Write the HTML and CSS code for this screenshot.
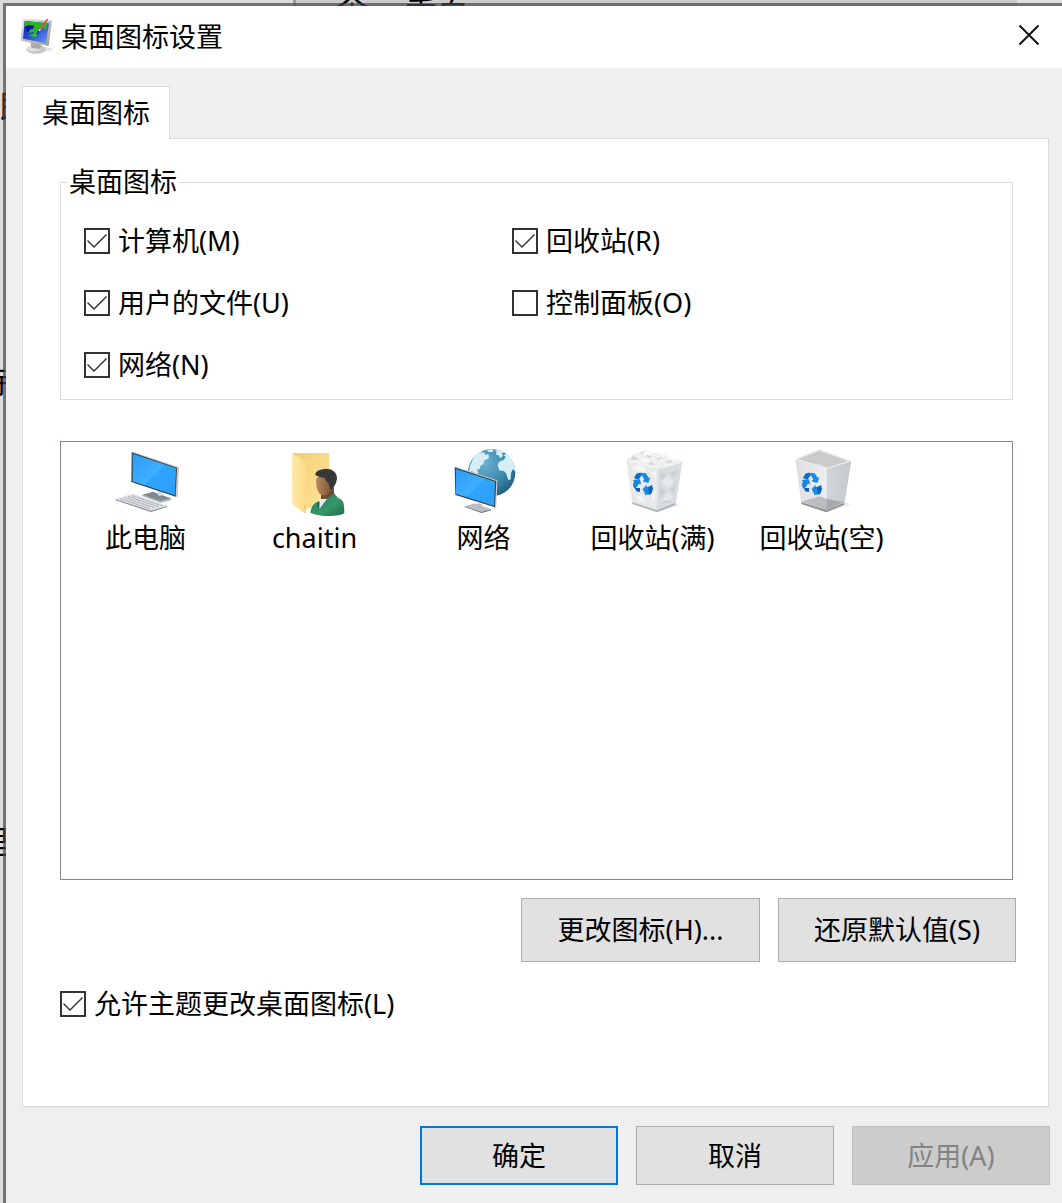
FILE: index.html
```html
<!DOCTYPE html>
<html lang="zh-CN">
<head>
<meta charset="utf-8">
<meta name="viewport" content="width=device-width, initial-scale=1">
<title>桌面图标设置</title>
<link rel="stylesheet" href="styles.css">
</head>
<body>
<svg width="0" height="0" class="defs" aria-hidden="true">
  <defs>
    <linearGradient id="screen" x1="0" y1="0" x2="1" y2="1">
      <stop offset="0" stop-color="#2a9cf5"/><stop offset=".5" stop-color="#3fb0ff"/><stop offset=".51" stop-color="#2ea4fd"/><stop offset="1" stop-color="#2ba0fb"/>
    </linearGradient>
    <linearGradient id="folder" x1="0" y1="0" x2="1" y2="1">
      <stop offset="0" stop-color="#f3cf76"/><stop offset="1" stop-color="#ffe49a"/>
    </linearGradient>
    <linearGradient id="flap" x1="0" y1="0" x2="1" y2="0">
      <stop offset="0" stop-color="#ffe9a9"/><stop offset="1" stop-color="#fbdc83"/>
    </linearGradient>
    <linearGradient id="skin" x1="0" y1="0" x2="1" y2="0">
      <stop offset="0" stop-color="#b88961"/><stop offset="1" stop-color="#76502f"/>
    </linearGradient>
    <linearGradient id="coat" x1="0" y1="0" x2="1" y2="1">
      <stop offset="0" stop-color="#2b805c"/><stop offset=".6" stop-color="#34966b"/><stop offset="1" stop-color="#216b4c"/>
    </linearGradient>
    <radialGradient id="globe" cx=".35" cy=".3" r=".75">
      <stop offset="0" stop-color="#6db4d3"/><stop offset=".6" stop-color="#3c88ad"/><stop offset="1" stop-color="#225f82"/>
    </radialGradient>
    <linearGradient id="binfront" x1="0" y1="0" x2="1" y2="0">
      <stop offset="0" stop-color="#dcdee0"/><stop offset="1" stop-color="#eeeeef"/>
    </linearGradient>
    <linearGradient id="binside" x1="0" y1="0" x2="1" y2="0">
      <stop offset="0" stop-color="#d2d5d8"/><stop offset="1" stop-color="#c3c9cd"/>
    </linearGradient>
    <linearGradient id="bezel" x1="0" y1="0" x2="1" y2="1">
      <stop offset="0" stop-color="#e7e7e7"/><stop offset="1" stop-color="#9c9c9c"/>
    </linearGradient>
    <linearGradient id="blue" x1="0" y1="0" x2="1" y2="1">
      <stop offset="0" stop-color="#0718a8"/><stop offset=".5" stop-color="#3150d6"/><stop offset="1" stop-color="#6a9cf5"/>
    </linearGradient>
    <g id="recycle">
      <path fill="#0c6cc5" d="M168 101l10-3 10 2-6 9-8 10-13-5z"/>
      <path fill="#168be4" d="M178 98l18 2 9 13 5-1-6 17-18-5 6-5-6-11-8-4z"/>
      <path fill="#168be4" d="M161 119l18-1 3 15-6-2-7 11-8 3-3-13 3-8-4-2z"/>
      <path fill="#0b5fb6" d="M158 133l9 11h12v12l-11-2z"/>
      <path fill="#168be4" d="M187 147l12-13v7l16-2-3 22-8 3h-7v4z"/>
      <path fill="#0b62ba" d="M203 142l12-7 3 12-5 14-6 3z"/>
    </g>
  </defs>
</svg>

<div class="backdrop" aria-hidden="true">
  <span class="behind behind-top-a">个</span>
  <span class="behind behind-top-b">重白</span>
  <span class="behind behind-left-a">即</span>
  <span class="behind behind-left-b">特</span>
  <span class="behind behind-left-c">理</span>
</div>

<main class="dialog">
  <header class="titlebar">
    <svg class="title-icon" viewBox="60 48 108 120" aria-hidden="true">
      <ellipse cx="124" cy="145" rx="34" ry="8" fill="#e6e6e6"/>
      <ellipse cx="108" cy="145" rx="29" ry="13" fill="#c4c4c4"/>
      <ellipse cx="103" cy="142" rx="22" ry="9" fill="#e2e2e2"/>
      <path fill="#a8a8a8" d="M91 124l34 7-4 13-26-3z"/>
      <path fill="url(#bezel)" d="M68 53l88 6-10 76-84-15z"/>
      <path fill="url(#blue)" d="M74 60l73 7-9 60-69-14z"/>
      <path fill="#25b925" d="M75 60l68 7-4 16-18-1-8 7-2 17-12 3-14-7 15-3 2-7-14 3-8-3 19-18-12-3-14 8z"/>
      <path fill="#0717a2" d="M77 75l26-1-4 10-8 1-5 9-6-1z"/>
      <path fill="none" stroke="#fff" stroke-width="4" d="M105 103l18-20"/>
      <path fill="none" stroke="#df5138" stroke-width="5" d="M119 85l24-31"/>
      <path fill="#1c43b8" d="M105 101l10-13 6 5-12 10z"/>
    </svg>
    <h1 class="title">桌面图标设置</h1>
    <button class="close" type="button" aria-label="关闭">
      <svg viewBox="0 0 20 20" aria-hidden="true"><path d="M0.500 0.500l19 19M19.500 0.500l-19 19"/></svg>
    </button>
  </header>

  <form class="content">
    <div class="tabs" role="tablist">
      <button class="tab" type="button" role="tab" aria-selected="true" aria-controls="panel" id="tab">桌面图标</button>
    </div>
    <section class="panel" role="tabpanel" id="panel" aria-labelledby="tab">
      <fieldset class="group">
        <legend>桌面图标</legend>
        <div class="options">
          <label class="check"><input type="checkbox" checked>计算机(M)</label>
          <label class="check"><input type="checkbox" checked>回收站(R)</label>
          <label class="check"><input type="checkbox" checked>用户的文件(U)</label>
          <label class="check"><input type="checkbox">控制面板(O)</label>
          <label class="check"><input type="checkbox" checked>网络(N)</label>
        </div>
      </fieldset>

      <ul class="icons">
        <li class="item">
          <svg viewBox="28 18 216 216" aria-hidden="true">
            <path fill="#a9b1b7" d="M125 165l31-10 55 20-1 6-31 7-54-20z"/>
            <path fill="#7d8891" d="M127 164l29-8 53 19-30 7z"/>
            <path fill="#d7dde1" d="M171 148l14 5v12l-8 3-6-3z"/>
            <path fill="#c6cacd" d="M94 36l3-1 138 46-4 91-7-1z"/>
            <path fill="#39424a" d="M93 37l136 46-4 87-133-44z"/>
            <path fill="url(#screen)" d="M96 41l130 44-3 81-127-42z"/>
            <path fill="#e3e7ea" stroke="#c3c9cd" d="M45 178l50-16 104 36-48 17z"/>
            <path fill="#858f96" d="M45 178v3l106 35 48-15v-3l-48 14z"/>
            <path fill="none" stroke="#aab2b8" stroke-width="4" stroke-dasharray="6 2" d="M60 177l88 29M71 173l89 30M82 170l91 30M94 167l92 31"/>
          </svg>
          <span>此电脑</span>
        </li>
        <li class="item">
          <svg viewBox="26 18 216 216" aria-hidden="true">
            <path fill="url(#folder)" d="M66 39h111v151l-70 18-41-18z"/>
            <path fill="url(#flap)" d="M66 39l41 30v125l-5 3v23l-36-28z"/>
            <path fill="#d7ad4c" opacity=".5" d="M102 197l5-3v25l-5 1z"/>
            <path fill="url(#coat)" d="M120 218q2-15 9-24 6-7 19-12l12-12 31-10 12 14q14 3 17 17 2 14 2 29-15 8-43 8-38 0-59-10z"/>
            <path fill="#e9eef0" d="M147 181l6-8 17 4-9 11-14 19z"/>
            <path fill="#195a42" d="M142 186l5 1-1 22-5-12z"/>
            <path fill="#714b31" d="M152 160l22-6 17-12v20l-22 14-17 1z"/>
            <path fill="url(#skin)" d="M137 124q0-16 20-18 28 1 31 18 0 20-15 37-9 6-20 4-15-8-16-41z"/>
            <path fill="#373737" d="M135 106q-1-10 11-15 17-8 33-3 21 7 21 27-1 16-10 27-5 6-8 8-4-3-7-20-9-8-12-17-14 0-28-7z"/>
          </svg>
          <span>chaitin</span>
        </li>
        <li class="item">
          <svg viewBox="24 18 216 216" aria-hidden="true">
            <circle cx="155" cy="98" r="71" fill="url(#globe)"/>
            <g fill="#d5edf3">
              <path d="M102 51q11-14 28-20l-8 9 10-3 5 9 8-4 2 12-15 8-2 11-8 3-3 11-9 2 6 10-7 3-13-8-10 5 5-25z"/>
              <path d="M141 31q8-4 17-3l2 7-12 2zM164 29q17 1 28 8l-7 4 5 6-10 8-3-9-9-2 2-8z"/>
              <path d="M177 65l14-5 6-9-6-5 7-5q27 21 28 54l-7-8-6 11-1 20-7 3-7-22-8-6-12-2-5-15z"/>
            </g>
            <path fill="#b9bfc4" d="M74 199l30-9 49 18-29 10z"/>
            <path fill="#69737a" d="M74 199l50 17 29-8v3l-28 8-51-18z"/>
            <path fill="#b5bcc1" d="M113 189l12 4v12l-7 3-5-2z"/>
            <path fill="#cdd1d4" d="M43 81l4-1 125 41-3 81-5 1z"/>
            <path fill="#3c464e" d="M44 82l125 41-4 79L46 165z"/>
            <path fill="url(#screen)" d="M48 87l117 38-3 72-114-36z"/>
          </svg>
          <span>网络</span>
        </li>
        <li class="item">
          <svg viewBox="110 18 216 216" aria-hidden="true">
            <path fill="#f0f0f0" d="M285 189l17 7-68 20z"/>
            <path fill="#dfe2e4" d="M138 59l49-26 118 34-71 26z"/>
            <path fill="#e6e8ea" d="M138 58l94 29-2 128-74-23z"/>
            <path fill="#d9dcdf" d="M232 87l74-21-20 128-56 21z"/>
            <path fill="#eff0f1" d="M144 57l16-17 28 3 5-17 24 13 15-1 30-1-1 16 31 2 9 13-38 13-33 7-24-7-17-2-22-10-19 2z"/>
            <path fill="#d0d4d7" d="M160 47l18 13-28-1zM196 43l20 7-14 5zM228 56l22-5-16 10zM250 70l20-10 8 6zM212 66l14 10-22-3z"/>
            <path fill="#fafafa" d="M193 27l24 15-25 5zM235 38l27-1-12 15zM260 58l26-5 6 11zM180 58l22-4 4 10-16 5z"/>
            <path fill="#f4f5f5" d="M150 80l28-6 22 15-9 8-25-5zM212 100l16-8-3 26zM211 161l17-10-8 32zM165 169l22-2 9 20-18-3z"/>
            <path fill="#cbd0d3" d="M238 94l20 13-16 15zM268 101l22-13-7 25zM237 137l20 18-19 17zM268 149l20-16-8 29zM241 190l20-14 12 11z"/>
            <path fill="#e6e8ea" d="M243 125l18-18 19 15-17 24zM246 181l14-24 18 14-12 11z"/>
            <path fill="#b3b8bb" d="M156 187l74 23 56-22-1 8-55 21-74-25z"/>
            <use href="#recycle"/>
          </svg>
          <span>回收站(满)</span>
        </li>
        <li class="item">
          <svg viewBox="107 18 216 216" aria-hidden="true">
            <path fill="#eee" d="M282 186l19 8-68 22z"/>
            <path fill="#dcdddf" d="M135 57l72-29 96 35-73 24z"/>
            <path fill="#c9cbcd" d="M144 58l63-25v38l-32 0zM207 33l86 31-63 20-23-12z"/>
            <path fill="url(#binfront)" d="M135 57l94 28-1 130-75-24z"/>
            <path fill="url(#binside)" d="M229 85l74-22-21 130-54 22z"/>
            <path fill="#bbbdbf" d="M153 185l54-16 21 8v34z"/>
            <path fill="#a6aaad" d="M228 177l54 9-54 24z"/>
            <path fill="#8f9396" d="M153 187l75 23 54-21v5l-54 23-75-25z"/>
            <path fill="none" stroke="#f1f1f2" stroke-width="3" d="M136 57l71-28 95 34-73 22z"/>
            <use href="#recycle" x="-3"/>
          </svg>
          <span>回收站(空)</span>
        </li>
      </ul>

      <div class="icon-actions">
        <button class="button" type="button">更改图标(H)...</button>
        <button class="button" type="button">还原默认值(S)</button>
      </div>

      <label class="check"><input type="checkbox" checked>允许主题更改桌面图标(L)</label>
    </section>

    <footer class="footer">
      <button class="button primary" type="submit">确定</button>
      <button class="button" type="button">取消</button>
      <button class="button" type="button" disabled>应用(A)</button>
    </footer>
  </form>
</main>
</body>
</html>
```
FILE: styles.css
```css
* {
  box-sizing: border-box;
}

body {
  margin: 0;
  min-height: 100vh;
  display: flex;
  position: relative;
  overflow-x: hidden;
  background: #d0d0d0;
  color: #000;
  font-family: "Noto Sans", "Noto Sans CJK SC", sans-serif;
  font-size: 27px;
  line-height: 36px;
}

button,
input {
  font: inherit;
  color: inherit;
  margin: 0;
}

.defs {
  position: absolute;
}

/* The window that lies under the dialog */
.backdrop {
  position: absolute;
  inset: 0;
  overflow: hidden;
  background: linear-gradient(to right, #dcdcdc 0 293px, #999 293px 296px, #cbcbcb 296px calc(100% - 45px), #e0e0e0 calc(100% - 45px));
}

.behind {
  position: absolute;
  font-size: 32px;
  line-height: 36px;
  white-space: nowrap;
}

.behind-top-a { left: 336px; top: -10px; }
.behind-top-b { left: 405px; top: -5px; }
.behind-left-a { left: -1px; top: 88px; }
.behind-left-b { left: -24px; top: 363px; }
.behind-left-c { left: -24px; top: 824px; }

.dialog {
  position: relative;
  flex: 1;
  min-width: 0;
  margin: 3px 0 0 3px;
  border: solid rgba(70, 70, 70, 0.7);
  border-width: 3px 0 0 3px;
  display: flex;
  flex-direction: column;
  background: #efefef;
  background-clip: padding-box;
}

.titlebar {
  display: flex;
  align-items: center;
  height: 62px;
  padding: 0 23px 0 14px;
  background: #fff;
}

.title-icon {
  width: 36px;
  height: 40px;
  margin-right: 5px;
}

.title {
  flex: 1;
  margin: 0;
  font-size: 27px;
  font-weight: 400;
}

.close {
  display: flex;
  padding: 0 0 4px;
  border: 0;
  background: none;
}

.close svg {
  width: 20px;
  height: 20px;
  overflow: visible;
  fill: none;
  stroke: #111;
  stroke-width: 2;
}

.content {
  flex: 1;
  display: flex;
  flex-direction: column;
  padding: 18px 13px 18px 16px;
}

.tabs {
  display: flex;
  margin-bottom: -1px;
  z-index: 1;
}

.tab {
  width: 148px;
  height: 53px;
  padding: 0;
  border: 1px solid #d9d9d9;
  border-bottom: 0;
  background: #fff;
}

.panel {
  flex: 1;
  display: flex;
  flex-direction: column;
  padding: 25px 35px 0 37px;
  border: 1px solid #d9d9d9;
  background: #fff;
}

.group {
  min-width: 0;
  margin: 0;
  padding: 23px 23px 16px;
  border: 1px solid #dcdcdc;
}

.group legend {
  margin-left: -17px;
  padding: 0 2px;
}

.options {
  display: grid;
  grid-template-columns: 428px 1fr;
  row-gap: 26px;
}

.check {
  display: flex;
  align-items: center;
  gap: 8px;
}

.check input {
  appearance: none;
  flex: none;
  display: grid;
  place-content: center;
  width: 26px;
  height: 26px;
  border: 2px solid #333;
  background: #fff;
}

.check input:checked::before {
  content: "";
  width: 20px;
  height: 16px;
  background: #333;
  clip-path: polygon(0 8px, 1px 7px, 7px 13px, 19px 1px, 20px 2px, 7px 15px);
}

.icons {
  display: flex;
  flex-wrap: wrap;
  align-content: flex-start;
  min-height: 439px;
  margin: 41px 0 18px;
  padding: 4px 0;
  border: 1px solid #828790;
  list-style: none;
}

.item {
  display: flex;
  flex-direction: column;
  align-items: center;
  gap: 2px;
  width: 169px;
}

.item svg {
  width: 72px;
  height: 72px;
}

.icon-actions {
  display: grid;
  grid-template-columns: 239px 238px;
  justify-content: end;
  gap: 18px;
  margin: 0 -3px 24px 0;
}

.button {
  height: 64px;
  padding: 0;
  border: 1px solid #adadad;
  background: #e1e1e1;
}

.button.primary {
  border: 2px solid #0078d7;
}

.button:disabled {
  border-color: #bfbfbf;
  background: #ccc;
  color: #838383;
}

.footer {
  display: grid;
  grid-template-columns: repeat(3, 198px);
  justify-content: end;
  gap: 18px;
  margin: 19px -1px 0 0;
}

.footer .button {
  height: 59px;
}
```
